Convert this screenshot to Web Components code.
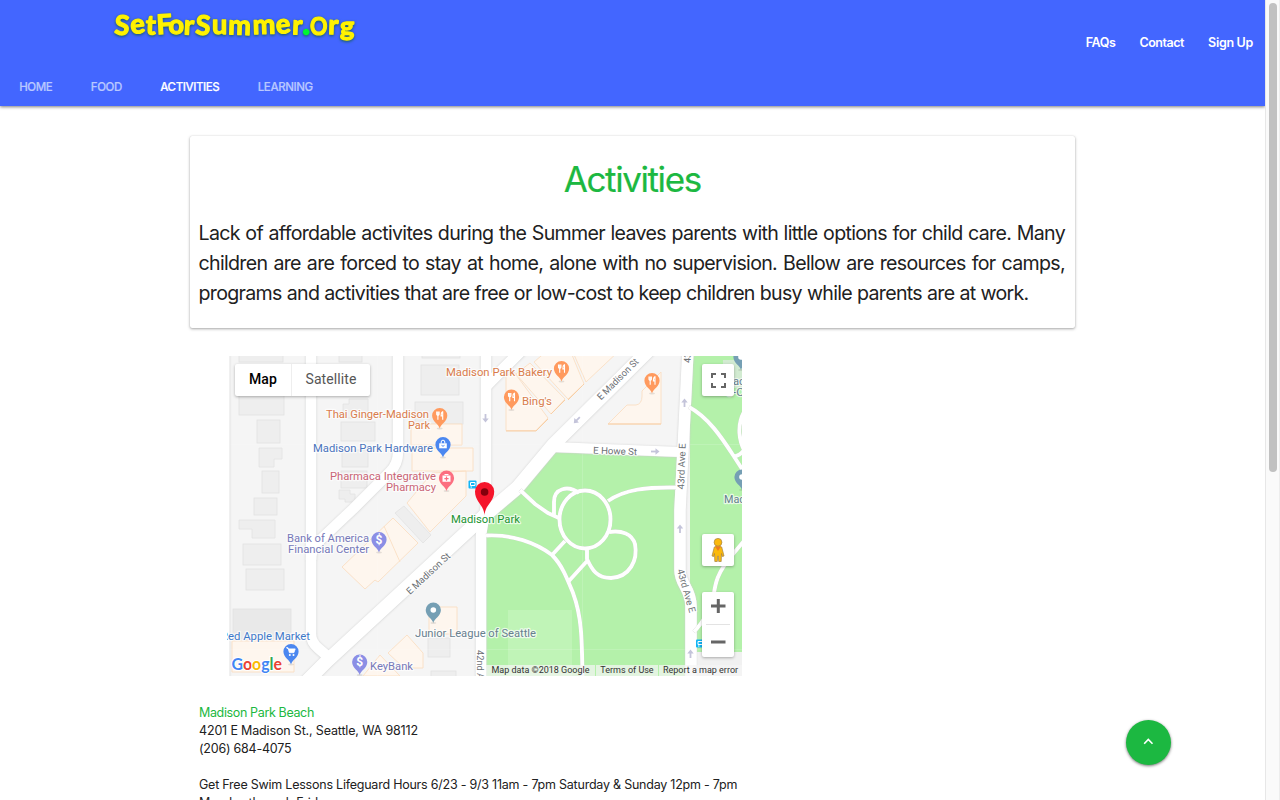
<!DOCTYPE html>
<html lang="en">
<head>
<meta charset="utf-8">
<title>SetForSummer.Org - Activities</title>
<style>
html,body{margin:0;height:100%;overflow:hidden;background:#fff}
body{font-family:Inter,"Liberation Sans",sans-serif;color:#212121}
</style>
</head>
<body>
<app-shell>
  <site-header>
    <nav-tab>HOME</nav-tab><nav-tab>FOOD</nav-tab><nav-tab active>ACTIVITIES</nav-tab><nav-tab>LEARNING</nav-tab>
    <top-link slot="links" style="--ls:-.4px">FAQs</top-link><top-link slot="links" style="--ls:-.45px">Contact</top-link><top-link slot="links">Sign Up</top-link>
  </site-header>
  <intro-card>
    <span slot="title">Activities</span>
    <text-line width="866.5">Lack of affordable activites during the Summer leaves parents with little options for child care. Many</text-line>
    <text-line width="866.5">children are are forced to stay at home, alone with no supervision. Bellow are resources for camps,</text-line>
    <text-line width="830">programs and activities that are free or low-cost to keep children busy while parents are at work.</text-line>
  </intro-card>
  <map-view></map-view>
  <place-info>
    <span slot="name">Madison Park Beach</span>
    <div style="letter-spacing:-.16px">4201 E Madison St., Seattle, WA 98112</div>
    <div>(206) 684-4075</div>
    <div>&nbsp;</div>
    <div>Get Free Swim Lessons Lifeguard Hours 6/23 - 9/3 11am - 7pm Saturday &amp; Sunday 12pm - 7pm</div>
    <div>Monday through Friday</div>
  </place-info>
  <top-button slot="float"></top-button>
  <scroll-rail slot="rail"></scroll-rail>
</app-shell>
<script>
const define = (name, html, setup) => {
  const t = document.createElement('template');
  t.innerHTML = html;
  customElements.define(name, class extends HTMLElement {
    connectedCallback() {
      if (this.shadowRoot) return;
      this.attachShadow({mode: 'open'}).append(t.content.cloneNode(true));
      if (setup) setup(this);
    }
  });
};

define('app-shell', `
<style>
:host{display:flex;width:100%;height:100vh;overflow:hidden;position:relative}
main{flex:1;min-width:0;display:flex;flex-direction:column}
</style>
<main><slot></slot></main><slot name="float"></slot><slot name="rail"></slot>`);

define('nav-tab', `
<style>
:host{display:block;padding:0 19.2px;font-size:11.5px;line-height:39px;letter-spacing:-.4px;font-weight:500;color:#b9c8ff;-webkit-text-stroke:.2px}
:host([active]){color:#fff}
</style><slot></slot>`);

define('top-link', `
<style>
:host{display:block;padding:0 12px;font-size:12.5px;line-height:86px;font-weight:600;letter-spacing:var(--ls,-.3px);color:#fff}
</style><slot></slot>`);

define('site-header', `
<style>
:host{display:flex;flex-direction:column;justify-content:space-between;height:106px;flex:none;background:#4366ff;box-shadow:0 1px 3px rgba(0,0,0,.5)}
.top{display:flex;justify-content:space-between;height:68px;padding-left:108px}
.links{display:flex}
nav{display:flex;height:38px}
.logo{font:700 27px Lato,sans-serif;fill:#fff200;stroke:#fff200;stroke-width:1.3;stroke-linejoin:round;filter:drop-shadow(0 1px 1.5px #145a58)}
</style>
<div class="top">
  <svg width="260" height="60" viewBox="108 0 260 60"><g class="logo">
    <text x="114 131.500 145.500 157 168.500 183.500 195 212 228 253 277 292" y="34.200" rotate="4 -8 2 -3 0 3 4 0 2 -2 -8 2">SetForSummer</text>
    <text x="303" y="33.500" fill="#00f532" stroke="#00f532" stroke-width="2.5">.</text>
    <text transform="translate(310 35) scale(.8 .95)">O</text><text x="328 340" y="34 35.500" rotate="2 0">rg</text></g></svg>
  <div class="links"><slot name="links"></slot></div>
</div>
<nav><slot></slot></nav>`);

define('text-line', `
<style>
:host{display:block;line-height:30px;white-space:nowrap;text-align:justify;text-align-last:justify}
</style><slot></slot>`, el => { el.style.width = el.getAttribute('width') + 'px'; });

define('intro-card', `
<style>
:host{display:block;flex:none;box-sizing:border-box;width:885px;height:192px;margin:30px 0 0 190px;padding:20px 9px 0 8.500px;border-radius:2px;box-shadow:0 1px 3px rgba(0,0,0,.35),0 0 1px rgba(0,0,0,.15);font-size:19.6px;letter-spacing:-.68px}
h1{margin:0 0 16px;font-size:35px;line-height:46px;font-weight:400;text-align:center;letter-spacing:-1.4px;color:#1cb841;-webkit-text-stroke:.2px}
</style>
<h1><slot name="title"></slot></h1><slot></slot>`);

define('place-info', `
<style>
:host{display:block;flex:none;margin:28px 0 0 199px;font-size:12.5px;line-height:18px;letter-spacing:-.23px;white-space:nowrap}
header{color:#1cb841;letter-spacing:-.36px}
</style>
<header><slot name="name"></slot></header><slot></slot>`);

define('top-button', `
<style>
:host{position:absolute;left:1126px;top:720px;width:45px;height:45px;border-radius:50%;background:#1cb841;box-shadow:0 1px 3px rgba(0,0,0,.55)}
svg{display:block}
</style>
<svg width="45" height="45"><path d="M18.2 23.7 22.3 19.4 26.5 23.7" fill="none" stroke="#fff" stroke-width="1.6"/></svg>`);

define('scroll-rail', `
<style>
:host{display:block;flex:none;box-sizing:border-box;width:15px;height:100%;padding:3px 2px 0 3px;background:#fafafa;border-left:1px solid #e7e7e7;border-right:1px solid #ededed}
i{display:block;width:8px;height:469px;border-radius:4px;background:#c1c1c1}
</style><i></i>`);

/* Map drawing: lists of rectangles are [x1, y1, x2, y2]. */
const rects = list => list.map(([a,b,c,d]) => `<rect x="${a}" y="${b}" width="${c-a}" height="${d-b}"/>`).join('');
const grey = rects([[239,350,283,362],[339,350,362,362],[239,391,284,415],[257,420,280,443],[262,471,279,493],[254,498,277,515],
  [341,422,375,441],[342,450,368,467],[341,471,367,488],[421,365,459,395],[422,350,460,358],[415,402,463,424],
  [243,544,281,565],[246,569,284,590],[428,638,450,657],[431,671,456,680],[714,660,750,680]]);
const glyph = {
  food:'<path d="M-3-4V-1.600Q-3-.2-1.800-.2V4.200M-.6-4V-1.600Q-.6-.2-1.800-.2V-4M3-4.200V4.200M3-4Q1.200-3 1.400.4H3" fill="none" stroke="#fff" stroke-width="1.1"/>',
  bag:'<path d="M-3.800-1.200H3.800V3.800H-3.800Z" fill="#fff"/><path d="M-1.800-1V-2.500a1.800 1.800 0 0 1 3.600 0V-1" fill="none" stroke="#fff"/><path d="M-1.500.8Q0 2.800 1.500.8" fill="none" stroke="#4b87f0"/>',
  med:'<path d="M-4-2.600H4V3.800H-4ZM-2-4H2V-3H-2Z" fill="#fff"/><path d="M0-1.500V2.700M-2.100.6H2.100" stroke="#fc6f80" stroke-width="1.2"/>',
  bank:'<text y="4.2" text-anchor="middle" style="font:700 12px Roboto;fill:#fff;stroke:none">$</text>',
  dot:'<circle r="2.8" fill="#fff"/>',
  cart:'<path d="M-4.600-3.800H-3L-1.600 1.200H2.900L4.200-2.600H-2.600Z" fill="#fff" stroke="#fff" stroke-width=".8"/><circle cx="-1.2" cy="3.4" r="1" fill="#fff"/><circle cx="2.5" cy="3.4" r="1" fill="#fff"/>'
};
const pin = (x,y,c,k) => `<g transform="translate(${x} ${y})"><ellipse cy="13" rx="3" ry="1.1" fill="#000" opacity=".1"/><path d="M0 13C-.8 8.800-7.600 6-7.600 0A7.600 7.600 0 0 1 7.600 0C7.600 6 .8 8.800 0 13Z" fill="${c}"/>${glyph[k]}</g>`;
const label = (x,y,w,c,s,size=11) => `<text x="${x}" y="${y}" textLength="${w}" lengthAdjust="spacingAndGlyphs" fill="${c}" font-size="${size}">${s}</text>`;
const street = (x,y,r,w,s) => `<text transform="translate(${x} ${y}) rotate(${r})" textLength="${w}" lengthAdjust="spacingAndGlyphs" fill="#6b6f74" font-size="9.5">${s}</text>`;
const arrow = (x,y,r) => `<path transform="translate(${x} ${y}) rotate(${r})" d="M-4 0H2" fill="none" stroke="#c4c4da" stroke-width="1.8"/><path transform="translate(${x} ${y}) rotate(${r})" d="M.5-3.200 4.500 0 .5 3.200Z" fill="#c4c4da"/>`;

const roads = `
<path d="M227 350V680" stroke-width="5"/>
<path d="M311 350V634Q311 642 318 648L333 661" stroke-width="10.5"/>
<path d="M398 350V452Q398 464 390 472L353 509 317 543Q311 549 311 560" stroke-width="10.5"/>
<path d="M486 350V505L481 535V680" stroke-width="10.5"/>
<path d="M487 385 521 351" stroke-width="11"/>
<path d="M649 350 553 445 517 488 484 516 328 660 306 682" stroke-width="13.5"/>
<path d="M552 447 681 452" stroke-width="10"/>
<path d="M688 350 680 510V570C680 585 691 588 691 606V680" stroke-width="11.5"/>`;

define('map-view', `
<style>
:host{display:block;position:relative;flex:none;width:515px;height:320px;margin:28px 0 0 227px;overflow:hidden;font-family:Roboto,sans-serif}
svg{display:block}
.halo text{stroke:#fff;stroke-width:2.4px;stroke-linejoin:round;paint-order:stroke;stroke-opacity:.7}
.box{position:absolute;background:#fff;border-radius:2px;box-shadow:0 1px 3px rgba(0,0,0,.3)}
.type{left:8px;top:8px;width:135px;height:32px;display:flex;font-size:14px;line-height:31px;text-align:center;color:#565656}
.type b{width:56px;font-weight:500;color:#000;border-right:1px solid #eee;letter-spacing:.15px}
.type span{flex:1;letter-spacing:.1px}
.full{left:475px;top:8px;width:32px;height:32px}
.man{left:475px;top:178px;width:32px;height:32px}
.zoom{left:475px;top:236px;width:32px;height:65px}
.legal{position:absolute;right:0;bottom:0;height:11px;display:flex;gap:1px;font-size:9px;line-height:11px;color:#333;white-space:nowrap}
.legal span{box-sizing:border-box;background:rgba(245,245,245,.72);text-align:center}
</style>
<svg width="515" height="320" viewBox="227 356 515 320">
<rect x="227" y="356" width="515" height="320" fill="#f5f5f5"/>
<g fill="#b4f1aa">
<path d="M551 452 680 456 680 573 690 600V680H483V535L490 520 522 490Z"/>
<path d="M690 350H750V652H690Z"/></g>
<rect x="508" y="610" width="64" height="70" fill="#c0f4b7"/>
<rect x="723" y="360" width="20" height="28" fill="#d2ebd1"/>
<g fill="#eee" stroke="#e2e2e2" stroke-width=".8">${grey}
<path d="M259 448H282V459H274V467H259ZM349 404V399H368V418H343V404ZM339 490H350V494H355V502H345V499H339ZM239 520H275V538H252V529H239ZM395 513 404 506 431 535 423 543Z"/>
<rect x="233" y="609" width="58" height="30" fill="#e9e9e9"/></g>
<g fill="#fef6ee" stroke="#fbdfc3" stroke-width=".9">
<path d="M411 424H462V445H411ZM412 448H473V471H412ZM432 473 466 471V496L430 532 407 503Z"/>
<path d="M342 567 393 518 418 543 378 582 375 580 365 589ZM384 526 400 562"/>
<path d="M506 376 514 372 548 418 536 430.500H506ZM516 374 530 363 565 399 551 414ZM534 362 548 350H570L584 384 568 399ZM572 350H620L586 382Z"/>
<path d="M661 372V424H608L627 405H636Q642 404 642 396V391Z"/>
<path d="M232 641H294V672H232ZM429 607H457V634H429ZM388 653 407 635 423 653V668H404ZM363 676 380 655 400 676Z"/></g>
<path d="M608 424H661M506 431H536L548 419M551 414 565 400M568 400 584 384" fill="none" stroke="#f8cfa6"/>
<path d="M227 444.500H742M377.500 356V676M582.500 356V676M227 649.500H742" stroke="#fff" opacity=".14"/>
<g fill="none" stroke="#e0e2e2" transform="translate(0 .3)" stroke-linejoin="round" style="filter:drop-shadow(0 0 .8px #ccc)"><g>${roads}</g></g>
<g fill="none" stroke="#fff" stroke-linejoin="round">${roads}</g>
<path d="M697.500 652H742V676H697.500Z" fill="#f1f1f1"/>
<g fill="none" stroke="#fff" stroke-width="3.9" style="filter:drop-shadow(0 0 .5px #bbb)">
<ellipse cx="585" cy="519.5" rx="25.5" ry="29"/>
<path d="M520 490 535 504 548 513 560 518.500M554 515V502C554 488 568 485 579 493M608 501C625 489 647 487 676 487.500"/>
<path d="M609 532C622 530 632 534 635 544 638 560 630 577 611 578 597 578 592 570 587 559V548M588 560 568 582"/>
<path d="M486 535.500C512 534 536 543 552 555 562 565 567 578 573 593 582 617 582 640 582.500 680M552 555 565 541"/>
<path d="M689 407C708 417 722 438 733 455L744 472M744 412C736 427 740 442 744 450Q741 455 733 457M744 541 733 554C715 575 715 586 713 600 710 610 703 622 694 632"/></g>
${arrow(485.5,418,90)}${arrow(577,420,135)}${arrow(655,451.5,0)}${arrow(684.5,403,-90)}${arrow(680,529,-90)}${arrow(690.5,654,-90)}
<g class="halo">
${street(601,400.5,-45,54,'E Madison St')}${street(410,595,-43,56,'E Madison St')}${street(593,453.5,2,44,'E Howe St')}
${street(684,489.5,-88,46,'43rd Ave E')}${street(690.5,363,-88,10,'43')}${street(477,650,90,29,'42nd A')}
${street(677,570,74,45,'43rd Ave E')}
${label(446,376,106,'#d97c4c','Madison Park Bakery')}${label(522,405,30,'#d97c4c',"Bing's")}
${label(326,417.5,103,'#d97c4c','Thai Ginger-Madison')}${label(408,429,22,'#d97c4c','Park')}
${label(313,452,120,'#4a74bd','Madison Park Hardware')}
${label(330,480,106,'#c96576','Pharmaca Integrative')}${label(386,491,50,'#c96576','Pharmacy')}
${label(287,542,82,'#7679b9','Bank of America')}${label(288,553,81,'#7679b9','Financial Center')}
${label(415,637,121,'#687f8f','Junior League of Seattle')}${label(370,669.5,43,'#7679b9','KeyBank')}
${label(221,640,89,'#3e78c9','Red Apple Market')}${label(451,523,69,'#1b9432','Madison Park')}
${label(724,503,21,'#65808f','Mac')}${label(733,385,12,'#65808f','ac')}${label(726,396,18,'#65808f','o-C')}
</g>
<g fill="#12b5f5"><rect x="468.5" y="480.5" width="8" height="8" rx="1"/><rect x="696" y="639.5" width="8" height="8" rx="1"/></g>
<path d="M470.500 482.500H475V485.500H470.500ZM698 641.500H702.500V644.500H698ZM470.500 487H472M698 646H699.500" fill="none" stroke="#fff"/>
${pin(561.5,368.5,'#ff9a5e','food')}${pin(511.5,397,'#ff9a5e','food')}${pin(652,380.5,'#ff9a5e','food')}${pin(439.7,415.5,'#ff9a5e','food')}
${pin(443,444.5,'#4b87f0','bag')}${pin(446.5,478,'#fc6f80','med')}${pin(379,539.5,'#8b8ee5','bank')}${pin(359.7,662,'#8b8ee5','bank')}
${pin(433.3,610,'#759fb4','dot')}${pin(291,651.5,'#4b87f0','cart')}${pin(741,357,'#759fb4','dot')}${pin(742,477,'#759fb4','dot')}
<path d="M484.500 515C483.500 504 475 502 475 491.500A9.600 9.600 0 0 1 494.200 491.500C494.200 502 485.500 504 484.500 515Z" fill="#f5152b"/><circle cx="484.6" cy="492" r="3.8" fill="#84000c"/>
<text x="231.5" y="670" textLength="50.5" lengthAdjust="spacingAndGlyphs" style="font:700 17px Lato,sans-serif;stroke:#fff;stroke-width:2px;paint-order:stroke"><tspan fill="#4285f4">G</tspan><tspan fill="#ea4335">o</tspan><tspan fill="#fbbc05">o</tspan><tspan fill="#4285f4">g</tspan><tspan fill="#34a853">l</tspan><tspan fill="#ea4335">e</tspan></text>
</svg>
<div class="box type"><b>Map</b><span>Satellite</span></div>
<div class="box full"><svg width="32" height="32"><path d="M10 14V10H14M19 10H23V14M23 19V23H19M14 23H10V19" fill="none" stroke="#666" stroke-width="2"/></svg></div>
<div class="box man"><svg width="32" height="32"><path d="M12.300 13Q16 11 19.700 13L22 22 20.300 22.500 19.500 19.500 19.200 27.500H16.700L16.300 22H15.700L15.300 27.500H12.800L12.500 19.500 11.700 22.500 10 22Z" fill="#fbb90c" stroke="#a48143" stroke-width=".7"/><circle cx="16" cy="8.3" r="3.9" fill="#fbb90c" stroke="#a48143" stroke-width=".7"/><path d="M13 12.500H19L16 17Z" fill="#f07c1d"/></svg></div>
<div class="box zoom"><svg width="32" height="65"><path d="M9 14H23.500M16.300 7V21M9 50H23.500" stroke="#666" stroke-width="3"/><path d="M4 32.500H28" stroke="#e3e3e3"/></svg></div>
<div class="legal"><span style="width:109px">Map data ©2018 Google</span><span style="width:62px">Terms of Use</span><span style="width:83px">Report a map error</span></div>`);
</script>
</body>
</html>
